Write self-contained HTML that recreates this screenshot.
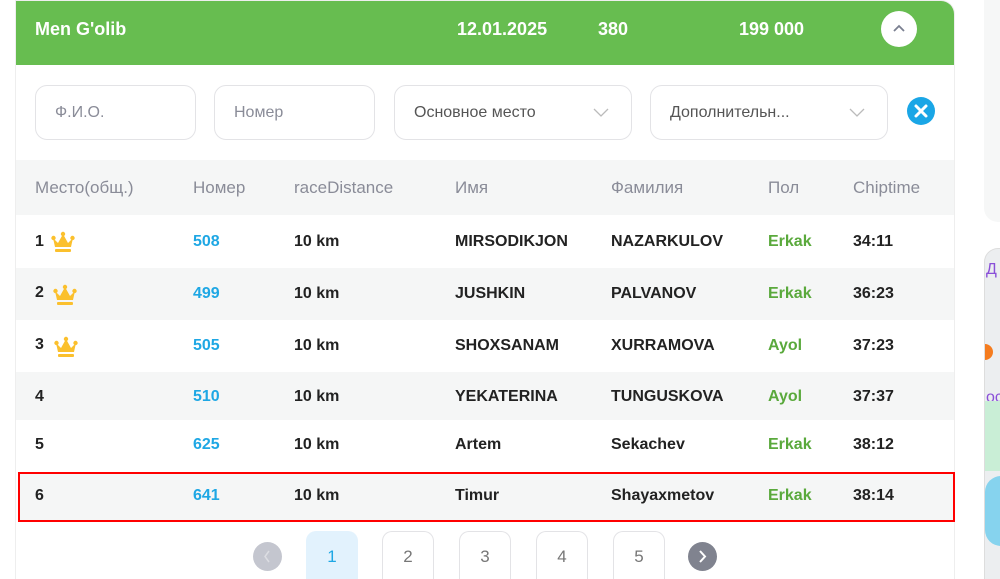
<!DOCTYPE html>
<html><head><meta charset="utf-8"><style>
*{box-sizing:border-box;margin:0;padding:0}
html,body{width:1000px;height:579px;overflow:hidden}
body{background:#fff;font-family:"Liberation Sans","DejaVu Sans",sans-serif}
#w{position:relative;width:1000px;height:579px;overflow:hidden}
.card{position:absolute;left:15px;top:0;width:940px;height:579px;border:1px solid #eee;border-bottom:none;border-radius:0 14px 0 0;overflow:hidden;background:#fff}
.hdr{position:absolute;left:0;top:0;width:940px;height:64px;background:#67bd50;color:#fff;font-weight:bold;font-size:18px}
.hdr span{position:absolute;top:18px}
.up{position:absolute;left:865px;top:10px;width:36px;height:36px;border-radius:50%;background:#fff}
.inp{position:absolute;top:85px;height:55px;border:1px solid #e3e3e6;border-radius:12px;color:#8a8c98;font-size:16px;padding:18px 0 0 19px}
.inp.s{color:#555}
.chev{position:absolute;right:22px;top:18px}
.x{position:absolute;left:907px;top:97px;width:28px;height:28px;border-radius:50%;background:#1aa6e6}
.row{position:absolute;left:16px;width:938px;font-size:16px;color:#222;font-weight:bold}
.row span{position:absolute}
.g{background:#f5f6f6}
.th{color:#8a8c98;font-weight:normal;font-size:17px}
.b{color:#1ea7e4}.gr{color:#5aa93c}
.pg{position:absolute;top:531px;width:52px;height:48px;border:1px solid #e3e3e6;border-bottom:none;border-radius:10px 10px 0 0;text-align:center;line-height:50px;color:#777;font-size:17px}
</style></head><body><div id="w">
<div class="card">
<div class="hdr"><span style="left:19px">Men G'olib</span><span style="left:441px">12.01.2025</span><span style="left:582px">380</span><span style="left:723px">199 000</span>
<div class="up"><svg width="36" height="36"><path d="M13 20l5-5 5 5" fill="none" stroke="#7a7f90" stroke-width="1.8"/></svg></div></div>
</div>
<div class="inp" style="left:35px;width:161px">Ф.И.О.</div>
<div class="inp" style="left:214px;width:161px">Номер</div>
<div class="inp s" style="left:394px;width:238px">Основное место<svg class="chev" width="16" height="16"><path d="M1 5l7 7 7-7" fill="none" stroke="#bbb" stroke-width="1.3"/></svg></div>
<div class="inp s" style="left:650px;width:238px">Дополнительн...<svg class="chev" width="16" height="16"><path d="M1 5l7 7 7-7" fill="none" stroke="#bbb" stroke-width="1.3"/></svg></div>
<div class="x"><svg width="28" height="28"><path d="M9 9l10 10M19 9L9 19" stroke="#fff" stroke-width="3" stroke-linecap="round"/></svg></div>

<div class="row g th" style="top:160px;height:55px"><span style="left:19px;top:18px">Место(общ.)</span><span style="left:177px;top:18px">Номер</span><span style="left:278px;top:18px">raceDistance</span><span style="left:439px;top:18px">Имя</span><span style="left:595px;top:18px">Фамилия</span><span style="left:752px;top:18px">Пол</span><span style="left:837px;top:18px">Chiptime</span></div>

<div class="row" style="top:215px;height:53px"><span style="left:19px;top:18px">1</span><span style="left:35px;top:15px"><svg width="24" height="24"><circle cx="12" cy="4" r="2.2" fill="#fbc02d"/><circle cx="2.5" cy="8" r="2.2" fill="#fbc02d"/><circle cx="21.5" cy="8" r="2.2" fill="#fbc02d"/><path d="M2 8l5 5 5-9 5 9 5-5-2 9H4z" fill="#fbc02d"/><rect x="4" y="19" width="16" height="3" rx="1" fill="#fbc02d"/></svg></span><span class="b" style="left:177px;top:18px">508</span><span style="left:278px;top:18px">10 km</span><span style="left:439px;top:18px">MIRSODIKJON</span><span style="left:595px;top:18px">NAZARKULOV</span><span class="gr" style="left:752px;top:18px">Erkak</span><span style="left:837px;top:18px">34:11</span></div>
<div class="row g" style="top:268px;height:52px"><span style="left:19px;top:16px">2</span><span style="left:37px;top:15px"><svg width="24" height="24"><circle cx="12" cy="4" r="2.2" fill="#fbc02d"/><circle cx="2.5" cy="8" r="2.2" fill="#fbc02d"/><circle cx="21.5" cy="8" r="2.2" fill="#fbc02d"/><path d="M2 8l5 5 5-9 5 9 5-5-2 9H4z" fill="#fbc02d"/><rect x="4" y="19" width="16" height="3" rx="1" fill="#fbc02d"/></svg></span><span class="b" style="left:177px;top:17px">499</span><span style="left:278px;top:17px">10 km</span><span style="left:439px;top:17px">JUSHKIN</span><span style="left:595px;top:17px">PALVANOV</span><span class="gr" style="left:752px;top:17px">Erkak</span><span style="left:837px;top:17px">36:23</span></div>
<div class="row" style="top:320px;height:52px"><span style="left:19px;top:16px">3</span><span style="left:38px;top:15px"><svg width="24" height="24"><circle cx="12" cy="4" r="2.2" fill="#fbc02d"/><circle cx="2.5" cy="8" r="2.2" fill="#fbc02d"/><circle cx="21.5" cy="8" r="2.2" fill="#fbc02d"/><path d="M2 8l5 5 5-9 5 9 5-5-2 9H4z" fill="#fbc02d"/><rect x="4" y="19" width="16" height="3" rx="1" fill="#fbc02d"/></svg></span><span class="b" style="left:177px;top:17px">505</span><span style="left:278px;top:17px">10 km</span><span style="left:439px;top:17px">SHOXSANAM</span><span style="left:595px;top:17px">XURRAMOVA</span><span class="gr" style="left:752px;top:17px">Ayol</span><span style="left:837px;top:17px">37:23</span></div>
<div class="row g" style="top:372px;height:48px"><span style="left:19px;top:16px">4</span><span class="b" style="left:177px;top:16px">510</span><span style="left:278px;top:16px">10 km</span><span style="left:439px;top:16px">YEKATERINA</span><span style="left:595px;top:16px">TUNGUSKOVA</span><span class="gr" style="left:752px;top:16px">Ayol</span><span style="left:837px;top:16px">37:37</span></div>
<div class="row" style="top:420px;height:50px"><span style="left:19px;top:16px">5</span><span class="b" style="left:177px;top:16px">625</span><span style="left:278px;top:16px">10 km</span><span style="left:439px;top:16px">Artem</span><span style="left:595px;top:16px">Sekachev</span><span class="gr" style="left:752px;top:16px">Erkak</span><span style="left:837px;top:16px">38:12</span></div>
<div class="row g" style="top:472px;left:18px;width:937px;height:50px;border:2px solid #f00"><span style="left:15px;top:13px">6</span><span class="b" style="left:173px;top:13px">641</span><span style="left:274px;top:13px">10 km</span><span style="left:435px;top:13px">Timur</span><span style="left:591px;top:13px">Shayaxmetov</span><span class="gr" style="left:748px;top:13px">Erkak</span><span style="left:833px;top:13px">38:14</span></div>

<div style="position:absolute;left:253px;top:542px;width:29px;height:29px;border-radius:50%;background:#c4c6cf"><svg width="29" height="29"><path d="M16 9l-4 5.5 4 5.5" fill="none" stroke="#dcdde2" stroke-width="1.5"/></svg></div>
<div class="pg" style="left:306px;background:#e2f2fd;border-color:#e2f2fd;color:#1ea7e4">1</div>
<div class="pg" style="left:382px">2</div>
<div class="pg" style="left:459px">3</div>
<div class="pg" style="left:536px">4</div>
<div class="pg" style="left:613px">5</div>
<div style="position:absolute;left:688px;top:542px;width:29px;height:29px;border-radius:50%;background:#80838f"><svg width="29" height="29"><path d="M12 9l5 5.5-5 5.5" fill="none" stroke="#fff" stroke-width="2"/></svg></div>

<div style="position:absolute;left:984px;top:0;width:16px;height:222px;background:#f6f7f7;border-radius:0 0 0 14px"></div>
<div style="position:absolute;left:984px;top:248px;width:16px;height:331px;background:#eceef0;border-radius:14px 0 0 0;overflow:hidden;border:1px solid #ddd;border-right:none;border-bottom:none">
<div style="position:absolute;top:12px;left:1px;color:#8a4fd8;font-size:16px">Д</div>
<div style="position:absolute;top:140px;left:1px;color:#8a4fd8;font-size:16px">ос</div>
<div style="position:absolute;top:95px;left:-8px;width:16px;height:16px;border-radius:50%;background:#f57c1f"></div>
<div style="position:absolute;top:152px;left:0;width:16px;height:70px;background:#c9eed6"></div>
<div style="position:absolute;top:227px;left:0;width:16px;height:70px;background:#86d3ee;border-radius:16px 0 0 16px"></div>
</div>
</div></body></html>
